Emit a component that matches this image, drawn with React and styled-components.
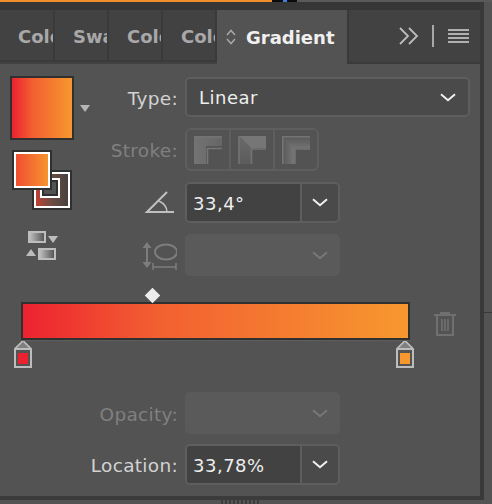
import React from 'react'
import styled, {createGlobalStyle} from 'styled-components'

const GlobalStyle = createGlobalStyle`
  html, body {
    margin: 0;
    padding: 0;
    background: #535353;
  }
`

const UI_FONT = `"DejaVu Sans", "Liberation Sans", sans-serif`
const GRADIENT = `linear-gradient(90deg, #ed2230, #f25e31 33.78%, #f7982f)`

const Window = styled.div`
  width: 492px;
  height: 504px;
  display: flex;
  flex-direction: column;
  overflow: hidden;
  background: #535353;
  font-family: ${UI_FONT};
`

const TopEdge = styled.div`
  display: flex;
  height: 2px;
  background: #5a5a5a;
`

const EdgeSegment = styled.div`
  width: ${p => p.$w}px;
  background: ${p => p.$color};
`

const Main = styled.div`
  display: flex;
  height: 498px;
`

const Panel = styled.div`
  width: 480px;
  display: flex;
  flex-direction: column;
`

const SideStrip = styled.div`
  width: 4px;
  background: #393939;
`

const SideRest = styled.div`
  flex: 1;
  position: relative;
  &::after {
    content: '';
    position: absolute;
    left: 0;
    right: 0;
    top: 310px;
    height: 1px;
    background: #393939;
  }
`

const TopBand = styled.div`
  height: 8px;
  background: #363636;
`

const TabBar = styled.div`
  height: 54px;
  display: flex;
  background: #424242;
`

const Tab = styled.div`
  width: ${p => p.$w || 53}px;
  height: 52px;
  flex: none;
  box-sizing: border-box;
  padding-left: 18px;
  border-right: 2px solid #3a3a3a;
  border-bottom: 2px solid #3a3a3a;
  overflow: hidden;
  white-space: nowrap;
  font-size: 18px;
  font-weight: bold;
  line-height: 54px;
  color: #a8a8a8;
`

const ActiveTab = styled.div`
  width: 130px;
  height: 54px;
  flex: none;
  box-sizing: border-box;
  display: flex;
  align-items: center;
  gap: 10px;
  padding: 0 0 0 9px;
  background: #535353;
  font-size: 18px;
  font-weight: bold;
  color: #f0f0f0;
`

const TabSpacer = styled.div`
  flex: 1;
  height: 54px;
  box-sizing: border-box;
  display: flex;
  align-items: center;
  border-left: 2px solid #3a3a3a;
  border-bottom: 2px solid #3a3a3a;
  padding-left: 50px;
  color: #bdbdbd;
`

const MenuDivider = styled.div`
  width: 2px;
  height: 22px;
  margin: 0 14px 0 13px;
  background: #a8a8a8;
`

const Body = styled.div`
  flex: 1;
  display: flex;
  flex-direction: column;
  padding-top: 13px;
`

const TopSection = styled.div`
  display: flex;
`

const SwatchColumn = styled.div`
  width: 105px;
  flex: none;
  padding-left: 10px;
  box-sizing: border-box;
`

const FormColumn = styled.div`
  flex: 1;
  display: flex;
  flex-direction: column;
  gap: 11px;
`

const MainSwatchRow = styled.div`
  display: flex;
  align-items: center;
  gap: 6px;
  margin-top: -1px;
`

const MainSwatch = styled.div`
  width: 64px;
  height: 64px;
  box-sizing: border-box;
  border: 2px solid #303030;
  background: ${GRADIENT};
`

const FillStrokePair = styled.div`
  position: relative;
  width: 62px;
  height: 60px;
  margin: 10px 0 0 2px;
`

const FillSwatch = styled.div`
  position: absolute;
  left: 0;
  top: 0;
  z-index: 1;
  width: 40px;
  height: 40px;
  box-sizing: border-box;
  border: 2px solid #303030;
  outline: 2px solid #fff;
  outline-offset: -4px;
  background: linear-gradient(90deg, #ef4a31, #f7982f);
`

const StrokeSwatch = styled.div`
  position: absolute;
  left: 20px;
  top: 20px;
  width: 40px;
  height: 40px;
  box-sizing: border-box;
  border: 2px solid #303030;
  outline: 2px solid #fff;
  outline-offset: -4px;
  background: linear-gradient(90deg, #c93f30, #6b4d44 50%, #453f3d);
  &::after {
    content: '';
    position: absolute;
    left: 8px;
    top: 8px;
    width: 12px;
    height: 12px;
    background: #535353;
    border: 2px solid #303030;
    outline: 2px solid #fff;
  }
`

const SwapIcon = styled.svg`
  display: block;
  margin: 21px 0 0 16px;
`

const Row = styled.div`
  display: flex;
  align-items: center;
  gap: 7px;
  height: ${p => p.$h || 40}px;
`

const Label = styled.div`
  width: 73px;
  flex: none;
  display: flex;
  justify-content: flex-end;
  padding-top: 2px;
  font-size: 18.5px;
  letter-spacing: 0.3px;
  white-space: nowrap;
  color: ${p => p.$disabled ? '#808080' : '#d2d2d2'};
`

const WideLabel = styled(Label)`
  width: 178px;
`

const Select = styled.div`
  width: ${p => p.$w}px;
  height: 40px;
  box-sizing: border-box;
  display: flex;
  align-items: center;
  justify-content: space-between;
  padding: 0 12px;
  border: 2px solid #5e5e5e;
  border-radius: 5px;
  background: #4a4a4a;
  font-size: 18px;
  letter-spacing: 0.5px;
  color: #eee;
`

const ComboBox = styled.div`
  width: 155px;
  height: 41px;
  box-sizing: border-box;
  display: flex;
  border: 2px solid #5e5e5e;
  border-radius: 5px;
  overflow: hidden;
  background: #4a4a4a;
`

const ComboValue = styled.div`
  width: 115px;
  flex: none;
  display: flex;
  align-items: center;
  padding: 2px 0 0 6px;
  box-sizing: border-box;
  background: #424242;
  border-right: 2px solid #5e5e5e;
  font-size: 18px;
  letter-spacing: 0.5px;
  color: #eee;
`

const ComboArrow = styled.div`
  flex: 1;
  display: flex;
  align-items: center;
  justify-content: center;
`

const DisabledSelect = styled.div`
  width: 155px;
  height: 42px;
  box-sizing: border-box;
  display: flex;
  align-items: center;
  justify-content: flex-end;
  padding-right: 12px;
  border-radius: 5px;
  background: #5a5a5a;
`

const ButtonGroup = styled.div`
  width: 134px;
  height: 43px;
  box-sizing: border-box;
  display: flex;
  border: 2px solid #5e5e5e;
  border-radius: 6px;
`

const GroupButton = styled.div`
  flex: 1;
  display: flex;
  align-items: center;
  justify-content: center;
  & + & {
    border-left: 2px solid #5e5e5e;
  }
`

const IconSlot = styled.div`
  width: 73px;
  flex: none;
  display: flex;
  justify-content: flex-end;
  padding-right: ${p => p.$pr || 0}px;
  box-sizing: border-box;
`

const GradientSection = styled.div`
  display: flex;
  gap: 20px;
  margin: 12px 0 0 21px;
`

const Slider = styled.div`
  position: relative;
  width: 389px;
  padding-top: 14px;
`

const Diamond = styled.div`
  position: absolute;
  top: 0;
  width: 11px;
  height: 11px;
  margin-left: -5px;
  margin-top: 1.5px;
  background: #ececec;
  transform: rotate(45deg);
`

const GradientBar = styled.div`
  height: 38px;
  box-sizing: border-box;
  border: 2px solid #303030;
  box-shadow: 0 1px 0 #5e5e5e;
  background: ${GRADIENT};
`

const StopRow = styled.div`
  display: flex;
  justify-content: space-between;
  width: 400px;
  margin-left: -7px;
`

const TrashIcon = styled.svg`
  display: block;
  margin-top: 24px;
`

const LowerSection = styled.div`
  display: flex;
  flex-direction: column;
  gap: 10px;
  margin-top: 24px;
`

const BottomBand = styled.div`
  height: 4px;
  margin-top: auto;
  background: #3c3c3c;
`

const Grip = styled.div`
  height: 4px;
  width: 38px;
  margin-left: 221px;
  background: repeating-linear-gradient(90deg, #3c3c3c 0 2px, #555 2px 4px);
`

const Chevron = ({color = '#f0f0f0'}) => (
  <svg width="16" height="9" viewBox="0 0 16 9" fill="none">
    <path d="M1 1.2 L8 7.2 L15 1.2" stroke={color} strokeWidth="2"/>
  </svg>
)

const GradientStop = ({color}) => (
  <svg width="18" height="28" viewBox="0 0 18 28">
    <path d="M1 27 V9 L9 1 L17 9 V27 Z" fill="#535353" stroke="#bdbdbd" strokeWidth="2"/>
    <path d="M2 9 L9 2 L16 9 Z" fill="#808080"/>
    <path d="M1 9 H17" stroke="#bdbdbd" strokeWidth="2"/>
    <rect x="4" y="13" width="10" height="11" fill={color}/>
  </svg>
)

const MiterIcon = () => (
  <svg width="28" height="28" viewBox="0 0 28 28">
    <defs>
      <linearGradient id="miterFill">
        <stop offset="0" stopColor="#737373"/>
        <stop offset="1" stopColor="#666"/>
      </linearGradient>
    </defs>
    <path d="M0 0 H28 V10 H12 V28 H0 Z" fill="url(#miterFill)"/>
    <path d="M28 1 H0 M28 12.5 H13.5 V28" fill="none" stroke="#767676" strokeWidth="1.6"/>
  </svg>
)

const BevelIcon = () => (
  <svg width="28" height="28" viewBox="0 0 28 28">
    <defs>
      <linearGradient id="bevelFill" x1="0" y1="0" x2="0" y2="1">
        <stop offset="0" stopColor="#6a6a6a"/>
        <stop offset="1" stopColor="#5c5c5c"/>
      </linearGradient>
    </defs>
    <path d="M1 0 L13 12 V28 H1 Z" fill="url(#bevelFill)"/>
    <path d="M1 0 H28 V12 H13 Z" fill="#767676"/>
    <path d="M1 0 V28 M28 13 H13.5 V28" fill="none" stroke="#747474" strokeWidth="1.6"/>
  </svg>
)

const RoundIcon = () => (
  <svg width="28" height="28" viewBox="0 0 28 28" fill="none" strokeWidth="1.2">
    {[0, 1, 2, 3, 4, 5, 6, 7, 8, 9, 10, 11].map(i => (
      <path
        key={i}
        d={`M28 ${i + 1} H${i + 1} V28`}
        stroke={`rgb(${92 + i * 3}, ${92 + i * 3}, ${92 + i * 3})`}
      />
    ))}
    <path d="M28 0.8 H0.8 V28 M28 13 H13 V28" stroke="#747474" strokeWidth="1.6"/>
  </svg>
)

const tabs = ['Color', 'Swatches', 'Color Guide', 'Color Themes']
const location = 33.78

const App = () => (
  <Window>
    <GlobalStyle/>
    <TopEdge>
      <EdgeSegment $w={272} $color="#ef8f2b"/>
      <EdgeSegment $w={11} $color="#0c0c0c"/>
      <EdgeSegment $w={4} $color="#3f7fe0"/>
      <EdgeSegment $w={10} $color="#0c0c0c"/>
    </TopEdge>
    <Main>
      <Panel>
        <TopBand/>
        <TabBar>
          {tabs.map((t, i) => <Tab key={t} $w={i === 0 ? 55 : 54}>{t}</Tab>)}
          <ActiveTab>
            <svg width="10" height="16" viewBox="0 0 10 16" fill="none">
              <path d="M1 6 L5 1.5 L9 6 M1 10 L5 14.5 L9 10" stroke="#a8a8a8" strokeWidth="1.5"/>
            </svg>
            Gradient
          </ActiveTab>
          <TabSpacer>
            <svg width="20" height="18" viewBox="0 0 20 18" fill="none">
              <path d="M1 1 L9 9 L1 17 M10 1 L18 9 L10 17" stroke="#bdbdbd" strokeWidth="1.8"/>
            </svg>
            <MenuDivider/>
            <svg width="21" height="14" viewBox="0 0 21 14" fill="#b0b0b0">
              <rect y="0" width="21" height="2"/>
              <rect y="4" width="21" height="2"/>
              <rect y="8" width="21" height="2"/>
              <rect y="12" width="21" height="2"/>
            </svg>
          </TabSpacer>
        </TabBar>
        <Body>
          <TopSection>
            <SwatchColumn>
              <MainSwatchRow>
                <MainSwatch/>
                <svg width="10" height="7" viewBox="0 0 10 7"><path d="M0 0 H10 L5 7 Z" fill="#b5b5b5"/></svg>
              </MainSwatchRow>
              <FillStrokePair>
                <StrokeSwatch/>
                <FillSwatch/>
              </FillStrokePair>
              <SwapIcon width="32" height="29" viewBox="0 0 32 29">
                <defs>
                  <linearGradient id="swapGrad">
                    <stop offset="0" stopColor="#c4c4c4"/>
                    <stop offset="1" stopColor="#505050"/>
                  </linearGradient>
                </defs>
                <rect x="3" y="1" width="16" height="10" fill="url(#swapGrad)" stroke="#bdbdbd" strokeWidth="2"/>
                <path d="M22 5 H32 L27 12 Z" fill="#bdbdbd"/>
                <path d="M0 25 H10 L5 18 Z" fill="#bdbdbd"/>
                <rect x="13" y="18" width="16" height="10" fill="url(#swapGrad)" stroke="#bdbdbd" strokeWidth="2"/>
              </SwapIcon>
            </SwatchColumn>
            <FormColumn>
              <Row>
                <Label>Type:</Label>
                <Select $w={285}>Linear<Chevron/></Select>
              </Row>
              <Row $h={43}>
                <Label $disabled>Stroke:</Label>
                <ButtonGroup>
                  <GroupButton><MiterIcon/></GroupButton>
                  <GroupButton><BevelIcon/></GroupButton>
                  <GroupButton><RoundIcon/></GroupButton>
                </ButtonGroup>
              </Row>
              <Row $h={41}>
                <IconSlot $pr={4}>
                  <svg width="29" height="23" viewBox="0 0 29 23" fill="none" stroke="#c0c0c0" strokeWidth="2">
                    <path d="M22 1 L2 21 H29"/>
                    <path d="M14 10 C20 13 22 17 22 21" strokeWidth="1.5"/>
                  </svg>
                </IconSlot>
                <ComboBox>
                  <ComboValue>33,4°</ComboValue>
                  <ComboArrow><Chevron/></ComboArrow>
                </ComboBox>
              </Row>
              <Row $h={42}>
                <IconSlot $pr={1}>
                  <svg width="35" height="29" viewBox="0 0 35 29" fill="none" stroke="#7d7d7d" strokeWidth="2">
                    <path d="M5 3 V25"/>
                    <path d="M0.5 7 L5 1 L9.5 7 Z M0.5 21 L5 27 L9.5 21 Z" fill="#7d7d7d" stroke="none"/>
                    <ellipse cx="24" cy="11" rx="11" ry="7.5"/>
                    <path d="M11 26 H34 M11 22 V29 M34 22 V29" strokeWidth="1.5"/>
                  </svg>
                </IconSlot>
                <DisabledSelect><Chevron color="#777"/></DisabledSelect>
              </Row>
            </FormColumn>
          </TopSection>
          <GradientSection>
            <div>
              <Slider>
                <Diamond style={{left: `${location}%`}}/>
                <GradientBar/>
              </Slider>
              <StopRow>
                <GradientStop color="#ed2230"/>
                <GradientStop color="#f7982f"/>
              </StopRow>
            </div>
            <TrashIcon width="22" height="24" viewBox="0 0 22 24" fill="none" stroke="#707070" strokeWidth="2">
              <path d="M0 3 H22 M7 3 V1 H15 V3"/>
              <path d="M3 3 V23 H19 V3"/>
              <path d="M8 7 V19 M11 7 V19 M14 7 V19" strokeWidth="1.6"/>
            </TrashIcon>
          </GradientSection>
          <LowerSection>
            <Row $h={42}>
              <WideLabel $disabled>Opacity:</WideLabel>
              <DisabledSelect><Chevron color="#777"/></DisabledSelect>
            </Row>
            <Row $h={41}>
              <WideLabel>Location:</WideLabel>
              <ComboBox>
                <ComboValue>33,78%</ComboValue>
                <ComboArrow><Chevron/></ComboArrow>
              </ComboBox>
            </Row>
          </LowerSection>
          <BottomBand/>
        </Body>
      </Panel>
      <SideStrip/>
      <SideRest/>
    </Main>
    <Grip/>
  </Window>
)

export default App
